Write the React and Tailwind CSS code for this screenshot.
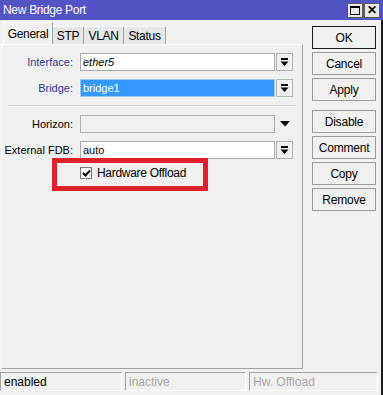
import React from 'react';

function DropBtn() {
  return (
    <div className="w-[17px] h-[18px] border border-[#b4b4b4] bg-[#f0f0f0] flex items-center justify-center">
      <svg width="9" height="9" viewBox="0 0 9 9">
        <rect x="1" y="0" width="7" height="2" fill="#000" />
        <path d="M0.5 3.5 H8.5 L4.5 8 Z" fill="#000" />
      </svg>
    </div>
  );
}

function Field({ label, value, labelClass = 'text-black', box = 'bg-white border-[#a9a9a9]', textClass = 'text-black', right }) {
  return (
    <div className="flex items-center h-[18px]">
      <div className={`w-[72px] text-right pr-[1px] ${labelClass}`}>{label}</div>
      <div className={`ml-[6px] w-[195px] h-[18px] border flex items-center px-[2px] ${box} ${textClass}`}>{value}</div>
      <div className="ml-[1px]">{right}</div>
    </div>
  );
}

function Btn({ children, primary }) {
  return (
    <div
      className={`w-[64px] h-[23px] flex items-center justify-center text-[12px] tracking-[-0.2px] text-black bg-[#f0f0f0] border ${
        primary ? 'border-[#1a1a1a]' : 'border-[#9a9a9a]'
      }`}
    >
      {children}
    </div>
  );
}

export default function App() {
  return (
    <div className="w-[383px] h-[395px] bg-[#f0f0f0] flex flex-col text-[11px] text-black font-['Liberation_Sans',Arial,sans-serif] overflow-hidden">
      {/* title bar */}
      <div className="h-[20px] bg-[#5353c6] flex items-center justify-between pl-[3px] pr-[3px]">
        <span className="text-white text-[12px] tracking-[-0.3px]">New Bridge Port</span>
        <div className="flex gap-[1px]">
          <div className="w-[16px] h-[15px] bg-[#e8e8e8] border border-[#5a5a5a] flex items-center justify-center">
            <div className="w-[10px] h-[9px] border border-black border-t-2" />
          </div>
          <div className="w-[16px] h-[15px] bg-[#e8e8e8] border border-[#5a5a5a] flex items-center justify-center text-[12px] font-bold leading-none">
            ✕
          </div>
        </div>
      </div>

      <div className="flex-1 flex flex-col border-r-2 border-[#1c1c1c]">
        <div className="flex h-[349px]">
          {/* left: tabs + panel */}
          <div className="w-[303px] flex flex-col pt-[2px]">
            <div className="flex items-end h-[22px] pl-[3px]">
              <div className="w-[50px] h-[22px] flex items-center justify-center bg-[#f0f0f0] border-t border-l border-white border-r border-r-[#a0a0a0] text-[12px] tracking-[-0.3px]">General</div>
              <div className="w-[31px] h-[18px] flex items-center justify-center bg-[#e6e6e6] border-t border-white border-r border-r-[#a0a0a0] text-[12px] tracking-[-0.3px]">STP</div>
              <div className="w-[40px] h-[18px] flex items-center justify-center bg-[#e6e6e6] border-t border-white border-r border-r-[#a0a0a0] text-[12px] tracking-[-0.3px]">VLAN</div>
              <div className="w-[42px] h-[18px] flex items-center justify-center bg-[#e6e6e6] border-t border-white border-r border-r-[#a0a0a0] text-[12px] tracking-[-0.3px]">Status</div>
            </div>
            <div className="relative flex-1 ml-[1px] border-t border-l border-white border-r border-b border-r-[#a0a0a0] border-b-[#a0a0a0] flex flex-col pt-[8px]">
              <Field label="Interface:" labelClass="text-[#1e3a9a]" value={<i>ether5</i>} right={<DropBtn />} />
              <div className="h-[8px]" />
              <Field
                label="Bridge:"
                labelClass="text-[#1e3a9a]"
                value="bridge1"
                box="bg-[#3399ff] border-[#9cc8ef]"
                textClass="text-white"
                right={<DropBtn />}
              />
              <div className="mt-[8px] mb-[8px] ml-[6px] mr-[6px] border-t border-[#d0d0d0] border-b border-b-white" />
              <Field
                label="Horizon:"
                value=""
                box="bg-[#f0f0f0] border-[#b0b0b0]"
                right={
                  <div className="w-[17px] h-[18px] flex items-center justify-center">
                    <svg width="10" height="6" viewBox="0 0 10 6">
                      <path d="M0 0 H10 L5 5.5 Z" fill="#000" />
                    </svg>
                  </div>
                }
              />
              <div className="h-[8px]" />
              <Field label="External FDB:" value="auto" right={<DropBtn />} />
              <div className="flex items-center mt-[7px] ml-[78px] h-[13px]">
                <div className="w-[12px] h-[12px] border border-[#7a7a7a] bg-white flex items-center justify-center">
                  <svg width="9" height="8" viewBox="0 0 9 8">
                    <path d="M1 4 L3.5 6.5 L8 1.5" stroke="#000" strokeWidth="2" fill="none" />
                  </svg>
                </div>
                <span className="ml-[5px] text-[12px] tracking-[-0.3px]">Hardware Offload</span>
              </div>
              {/* annotation */}
              <div className="absolute left-[50px] top-[113px] w-[156px] h-[33px] border-[5px] border-[#e0202c]" />
            </div>
          </div>

          {/* right: buttons */}
          <div className="flex-1 flex flex-col pl-[9px] pt-[6px]">
            <div className="flex flex-col gap-[3px]">
              <Btn primary>OK</Btn>
              <Btn>Cancel</Btn>
              <Btn>Apply</Btn>
            </div>
            <div className="flex flex-col gap-[3px] mt-[9px]">
              <Btn>Disable</Btn>
              <Btn>Comment</Btn>
              <Btn>Copy</Btn>
              <Btn>Remove</Btn>
            </div>
          </div>
        </div>

        {/* status bar */}
        <div className="flex gap-[3px] mt-[3px] h-[19px]">
          <div className="w-[122px] border-t border-l border-[#a0a0a0] border-b border-r border-b-white border-r-white flex items-center pl-[3px] text-[12px]">enabled</div>
          <div className="w-[121px] border-t border-l border-[#a0a0a0] border-b border-r border-b-white border-r-white flex items-center pl-[3px] text-[12px] text-[#a8a8a8]">inactive</div>
          <div className="w-[129px] border-t border-l border-[#a0a0a0] border-b border-r border-b-white border-r-white flex items-center pl-[3px] text-[12px] text-[#a8a8a8]">Hw. Offload</div>
        </div>
      </div>
    </div>
  );
}
